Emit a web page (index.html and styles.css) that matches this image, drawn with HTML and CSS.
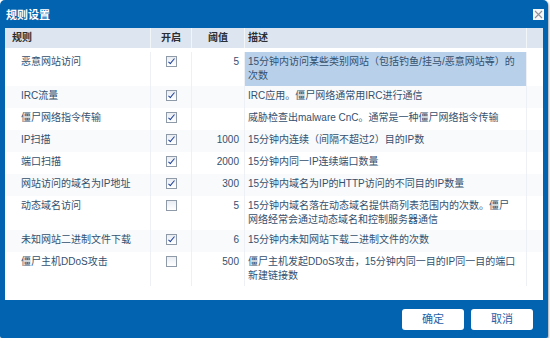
FILE: index.html
```html
<!DOCTYPE html>
<html>
<head>
	<title>规则设置</title>
	<meta charset="utf-8">
	<link rel="stylesheet" href="styles.css">
</head>
<body>
	<div class="dialog">
		<div class="titlebar">
			<span class="title">规则设置</span>
			<span class="closebtn">
				<svg width="9" height="9" viewBox="0 0 9 9"><path d="M1 1L8 8M8 1L1 8" stroke="#8d9299" stroke-width="1.1" fill="none"/></svg>
			</span>
		</div>

		<div class="content">
			<div class="grid head">
				<div class="c-name">规则</div>
				<div class="c-on">开启</div>
				<div class="c-val">阈值</div>
				<div class="c-desc">描述</div>
				<div class="c-scroll"></div>
			</div>

			<div class="rows">
				<div class="grid row">
					<div class="c-name">恶意网站访问</div>
					<div class="c-on"><span class="chk on"></span></div>
					<div class="c-val">5</div>
					<div class="c-desc selected">15分钟内访问某些类别网站（包括钓鱼/挂马/恶意网站等）的次数</div>
				</div>
				<div class="grid row">
					<div class="c-name">IRC流量</div>
					<div class="c-on"><span class="chk on"></span></div>
					<div class="c-val"></div>
					<div class="c-desc">IRC应用。僵尸网络通常用IRC进行通信</div>
				</div>
				<div class="grid row">
					<div class="c-name">僵尸网络指令传输</div>
					<div class="c-on"><span class="chk on"></span></div>
					<div class="c-val"></div>
					<div class="c-desc">威胁检查出malware CnC。通常是一种僵尸网络指令传输</div>
				</div>
				<div class="grid row">
					<div class="c-name">IP扫描</div>
					<div class="c-on"><span class="chk on"></span></div>
					<div class="c-val">1000</div>
					<div class="c-desc">15分钟内连续（间隔不超过2）目的IP数</div>
				</div>
				<div class="grid row">
					<div class="c-name">端口扫描</div>
					<div class="c-on"><span class="chk on"></span></div>
					<div class="c-val">2000</div>
					<div class="c-desc">15分钟内同一IP连续端口数量</div>
				</div>
				<div class="grid row">
					<div class="c-name">网站访问的域名为IP地址</div>
					<div class="c-on"><span class="chk on"></span></div>
					<div class="c-val">300</div>
					<div class="c-desc">15分钟内域名为IP的HTTP访问的不同目的IP数量</div>
				</div>
				<div class="grid row">
					<div class="c-name">动态域名访问</div>
					<div class="c-on"><span class="chk"></span></div>
					<div class="c-val">5</div>
					<div class="c-desc">15分钟内域名落在动态域名提供商列表范围内的次数。僵尸网络经常会通过动态域名和控制服务器通信</div>
				</div>
				<div class="grid row">
					<div class="c-name">未知网站二进制文件下载</div>
					<div class="c-on"><span class="chk on"></span></div>
					<div class="c-val">6</div>
					<div class="c-desc">15分钟内未知网站下载二进制文件的次数</div>
				</div>
				<div class="grid row">
					<div class="c-name">僵尸主机DDoS攻击</div>
					<div class="c-on"><span class="chk"></span></div>
					<div class="c-val">500</div>
					<div class="c-desc">僵尸主机发起DDoS攻击，15分钟内同一目的IP同一目的端口新建链接数</div>
				</div>
			</div>
		</div>

		<div class="footer">
			<div class="btn">确定</div>
			<div class="btn">取消</div>
		</div>
	</div>
</body>
</html>
```

FILE: styles.css
```css
body {
	margin: 0;
	background-color: #ffffff;
	font-family: "Liberation Sans", "Noto Sans CJK SC", sans-serif;
}
.dialog {
	width: 548px;
	height: 338px;
	background-color: #0264b0;
	border-radius: 5px 5px 2px 2px;
	box-shadow: 1px 1px 2px #a9adb3;
	display: flex;
	flex-direction: column;
}
.titlebar {
	height: 28px;
	padding: 0 4px 0 6px;
	display: flex;
	align-items: center;
	justify-content: space-between;
}
.title {
	color: white;
	font-size: 11px;
	font-weight: bold;
}
.closebtn {
	width: 11px;
	height: 11px;
	background-color: #f4f6f8;
	display: flex;
	align-items: center;
	justify-content: center;
	margin-top: 1px;
}
.content {
	margin: 0 5px;
	height: 272px;
	background-color: #ffffff;
	font-size: 10px;
}
.grid {
	display: grid;
	grid-template-columns: 146px 41px 53px 282px 16px;
}
.head {
	height: 20px;
	background-color: #dde6f0;
	color: #2a2f36;
	font-weight: bold;
	line-height: 20px;
}
.head div {
	border-right: 1px solid #f3f6f9;
}
.head .c-name {
	padding-left: 7px;
}
.head .c-on,
.head .c-val {
	text-align: center;
}
.head .c-desc {
	padding-left: 3px;
}
.head .c-scroll {
	border-right: none;
}
.rows {
	padding-top: 4px;
}
.row {
	color: #34506e;
	line-height: 14px;
}
.row:nth-child(even) {
	background-color: #f8fafb;
}
.row div {
	padding: 3px 0;
	border-right: 1px solid #edf1f5;
}
.row .c-name {
	padding-left: 16px;
}
.row .c-on {
	text-align: center;
}
.row .c-val {
	text-align: right;
	padding-right: 5px;
}
.row .c-desc {
	padding-left: 3px;
	padding-right: 10px;
}
.row .selected {
	background-color: #b9d0ea;
}
.chk {
	display: inline-block;
	width: 9px;
	height: 9px;
	border: 1px solid #8e9aa8;
	background: linear-gradient(#e9edf2, #ffffff);
	margin-top: 1px;
	position: relative;
}
.chk.on::after {
	content: "";
	position: absolute;
	left: 3px;
	top: 0px;
	width: 2px;
	height: 6px;
	border-right: 1.5px solid #1d3f99;
	border-bottom: 1.5px solid #1d3f99;
	transform: rotate(40deg);
}
.footer {
	flex: 1;
	display: flex;
	justify-content: flex-end;
	gap: 7px;
	padding: 9px 15px 0 0;
}
.btn {
	width: 62px;
	height: 21px;
	line-height: 21px;
	background-color: #ffffff;
	border-radius: 3px;
	color: #1e5fa8;
	font-size: 11px;
	text-align: center;
}
```
